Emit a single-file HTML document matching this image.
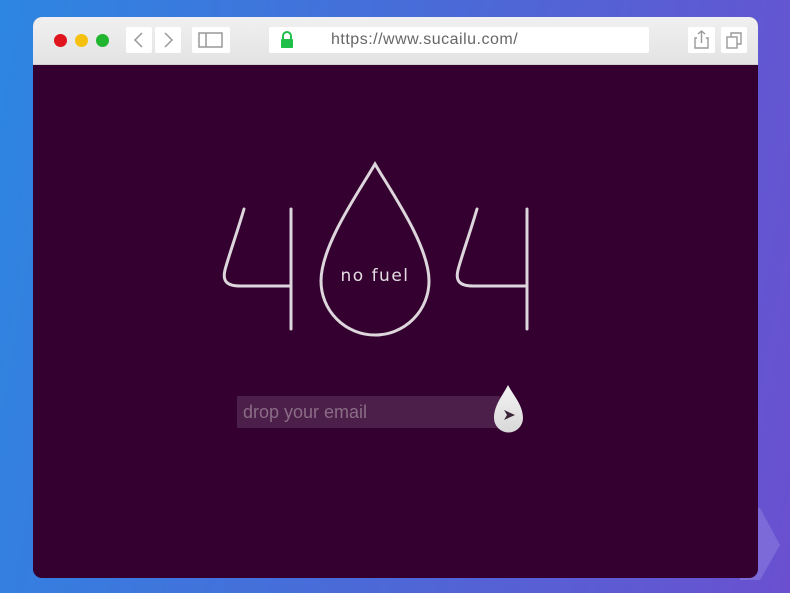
<!DOCTYPE html>
<html><head><style>
*{margin:0;padding:0;box-sizing:border-box}
body{width:790px;height:593px;overflow:hidden;background:linear-gradient(100deg,#2d86e2 0%,#4a6ad8 50%,#6a50cf 100%);font-family:"Liberation Sans",sans-serif;position:relative}
.win{position:absolute;left:33px;top:17px;width:725px;height:561px;border-radius:9px;overflow:hidden;background:#33002f}
.bar{position:absolute;left:0;top:0;width:725px;height:48px;background:linear-gradient(#f0f0f0,#e3e3e3);border-bottom:1px solid #d0d0d0}
.dot{position:absolute;top:17px;width:13px;height:13px;border-radius:50%}
.btn{position:absolute;top:10px;height:26px;background:#fff;border-radius:2px}
.url{position:absolute;left:236px;top:10px;width:380px;height:26px;background:#fff;border-radius:2px;color:#666;font-size:16px;line-height:26px;padding-left:62px;letter-spacing:.5px}
</style></head><body>
<svg style="position:absolute;left:740px;top:505px" width="45" height="75"><path d="M0,3 L20,3 L40,40 L20,75 L0,75Z" fill="#8a7ce0" opacity=".6"/></svg>
<div class="win">
<div class="bar">
<div class="dot" style="left:21px;background:#e0141c"></div>
<div class="dot" style="left:42px;background:#f5c10e"></div>
<div class="dot" style="left:63px;background:#22b530"></div>
<div class="btn" style="left:93px;width:26px"><svg width="26" height="26"><path d="M16,6 L9,13 L16,20" fill="none" stroke="#999" stroke-width="1.5"/></svg></div>
<div class="btn" style="left:122px;width:26px"><svg width="26" height="26"><path d="M10,6 L17,13 L10,20" fill="none" stroke="#999" stroke-width="1.5"/></svg></div>
<div class="btn" style="left:159px;width:38px"><svg width="38" height="26"><rect x="7" y="6" width="23" height="14" fill="none" stroke="#999" stroke-width="1.5"/><line x1="14" y1="6" x2="14" y2="20" stroke="#999" stroke-width="1.5"/></svg></div>
<div class="url">https://www.sucailu.com/</div>
<svg style="position:absolute;left:246px;top:14px" width="16" height="18"><path d="M4,8 V5 a4,4 0 0 1 8,0 V8" fill="none" stroke="#1fbf4a" stroke-width="2"/><rect x="2" y="8" width="12" height="9" rx="1" fill="#1fbf4a"/></svg>
<div class="btn" style="left:655px;width:27px"><svg width="27" height="26"><path d="M9,11 H7 V21 H20 V11 H18 M13.5,16 V4 M10,7 L13.5,4 L17,7" fill="none" stroke="#999" stroke-width="1.4"/></svg></div>
<div class="btn" style="left:688px;width:26px"><svg width="26" height="26"><rect x="6" y="10" width="10" height="11" fill="none" stroke="#999" stroke-width="1.4"/><path d="M10,10 V6 H20 V17 H16" fill="none" stroke="#999" stroke-width="1.4"/></svg></div>
</div>
</div>
<svg style="position:absolute;left:0;top:0" width="790" height="593">
<defs><linearGradient id="g" x1="0" y1="0" x2="0" y2="1"><stop offset="0" stop-color="#f4f4f4"/><stop offset="1" stop-color="#d8d8d8"/></linearGradient></defs>
<g fill="none" stroke="#ddd6dc" stroke-width="3" stroke-linecap="round">
<path d="M244,209 C236,236 228,258 225,270 C222,282 228,286 240,286 L290,286"/>
<path d="M291,209 L291,329"/>
<path d="M375,164 C360,190 321,245 321,281 A54,54 0 0 0 429,281 C429,245 390,190 375,164 Z"/>
<path d="M477,209 C469,236 461,258 458,270 C455,282 461,286 473,286 L526,286"/>
<path d="M527,209 L527,329"/>
</g>
<text x="375" y="281" text-anchor="middle" font-family="DejaVu Sans,sans-serif" font-size="17" fill="#e4dde4" letter-spacing="1.5">no fuel</text>
<rect x="237" y="396" width="263" height="32" fill="#4c1f4a"/>
<text x="243" y="418" font-family="Liberation Sans,sans-serif" font-size="18" fill="#8a6c86">drop your email</text>
<path d="M508,385 C503,395 494,405 494,418 A14.5,14.5 0 0 0 523,418 C523,405 513,395 508,385Z" fill="url(#g)"/>
<path d="M504,410 L515,415 L504,420 L507,415Z" fill="#3a2438"/>
</svg>
</body></html>
